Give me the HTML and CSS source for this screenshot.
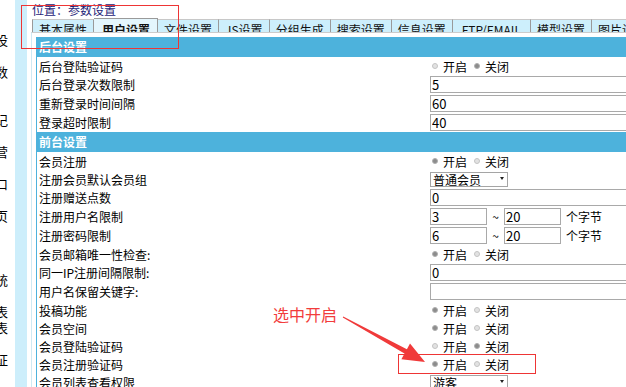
FILE: index.html
```html
<!DOCTYPE html>
<html lang="zh-CN">
<head>
    <meta charset="UTF-8">
    <title>参数设置</title>
    <link rel="stylesheet" href="styles.css">
</head>
<body>
    <div class="page">
        <div class="side-menu">
            <div>设</div><div></div><div>数</div><div></div><div></div><div>记</div><div></div>
            <div>营</div><div></div><div>口</div><div></div><div>页</div><div></div><div></div>
            <div></div><div>统</div><div></div><div>表</div><div>表</div><div></div><div>证</div>
        </div>
        <div class="side-bar"></div>
        <div class="main">
            <div class="crumb">位置：参数设置</div>
            <ul class="tabs">
                <li class="first">基本属性</li>
                <li class="on">用户设置</li>
                <li>文件设置</li>
                <li>JS设置</li>
                <li>分组生成</li>
                <li>搜索设置</li>
                <li>信息设置</li>
                <li class="wide">FTP/EMAIL</li>
                <li>模型设置</li>
                <li>图片设置</li>
            </ul>
            <div class="panel">
                <div class="cfg">
                    <div class="cfg-head">后台设置</div>
                    <div class="cfg-row">
                        <span class="cfg-label">后台登陆验证码</span>
                        <span class="cfg-value">
                            <input type="radio" name="adminpass"><label>开启</label>
                            <input type="radio" name="adminpass" class="second" checked><label>关闭</label>
                        </span>
                    </div>
                    <div class="cfg-row tall">
                        <span class="cfg-label">后台登录次数限制</span>
                        <span class="cfg-value"><input type="text" class="long" value="5"></span>
                    </div>
                    <div class="cfg-row tall">
                        <span class="cfg-label">重新登录时间间隔</span>
                        <span class="cfg-value"><input type="text" class="long" value="60"></span>
                    </div>
                    <div class="cfg-row tall">
                        <span class="cfg-label">登录超时限制</span>
                        <span class="cfg-value"><input type="text" class="long" value="40"></span>
                    </div>

                    <div class="cfg-head">前台设置</div>
                    <div class="cfg-row">
                        <span class="cfg-label">会员注册</span>
                        <span class="cfg-value">
                            <input type="radio" name="register" checked><label>开启</label>
                            <input type="radio" name="register" class="second"><label>关闭</label>
                        </span>
                    </div>
                    <div class="cfg-row">
                        <span class="cfg-label">注册会员默认会员组</span>
                        <span class="cfg-value">
                            <span class="pick"><select><option>普通会员</option><option>VIP会员</option></select></span>
                        </span>
                    </div>
                    <div class="cfg-row tall">
                        <span class="cfg-label">注册赠送点数</span>
                        <span class="cfg-value"><input type="text" class="long" value="0"></span>
                    </div>
                    <div class="cfg-row tall">
                        <span class="cfg-label">注册用户名限制</span>
                        <span class="cfg-value">
                            <input type="text" class="short" value="3"><span class="tilde">~</span><input type="text" class="short" value="20"><span class="unit">个字节</span>
                        </span>
                    </div>
                    <div class="cfg-row tall">
                        <span class="cfg-label">注册密码限制</span>
                        <span class="cfg-value">
                            <input type="text" class="short" value="6"><span class="tilde">~</span><input type="text" class="short" value="20"><span class="unit">个字节</span>
                        </span>
                    </div>
                    <div class="cfg-row">
                        <span class="cfg-label">会员邮箱唯一性检查:</span>
                        <span class="cfg-value">
                            <input type="radio" name="email" checked><label>开启</label>
                            <input type="radio" name="email" class="second"><label>关闭</label>
                        </span>
                    </div>
                    <div class="cfg-row tall">
                        <span class="cfg-label">同一IP注册间隔限制:</span>
                        <span class="cfg-value"><input type="text" class="long" value="0"></span>
                    </div>
                    <div class="cfg-row tall">
                        <span class="cfg-label">用户名保留关键字:</span>
                        <span class="cfg-value"><input type="text" class="long" value=""></span>
                    </div>
                    <div class="cfg-row">
                        <span class="cfg-label">投稿功能</span>
                        <span class="cfg-value">
                            <input type="radio" name="post" checked><label>开启</label>
                            <input type="radio" name="post" class="second"><label>关闭</label>
                        </span>
                    </div>
                    <div class="cfg-row">
                        <span class="cfg-label">会员空间</span>
                        <span class="cfg-value">
                            <input type="radio" name="space" checked><label>开启</label>
                            <input type="radio" name="space" class="second"><label>关闭</label>
                        </span>
                    </div>
                    <div class="cfg-row">
                        <span class="cfg-label">会员登陆验证码</span>
                        <span class="cfg-value">
                            <input type="radio" name="loginkey"><label>开启</label>
                            <input type="radio" name="loginkey" class="second" checked><label>关闭</label>
                        </span>
                    </div>
                    <div class="cfg-row">
                        <span class="cfg-label">会员注册验证码</span>
                        <span class="cfg-value">
                            <input type="radio" name="regkey" checked><label>开启</label>
                            <input type="radio" name="regkey" class="second"><label>关闭</label>
                        </span>
                    </div>
                    <div class="cfg-row">
                        <span class="cfg-label">会员列表查看权限</span>
                        <span class="cfg-value">
                            <span class="pick"><select><option>游客</option><option>会员</option></select></span>
                        </span>
                    </div>
                </div>
            </div>
        </div>
    </div>

    <!-- annotations drawn over the screenshot -->
    <div class="note">选中开启</div>
    <svg class="overlay" width="626" height="387" viewBox="0 0 626 387">
        <rect x="21.5" y="5.5" width="157" height="43" fill="none" stroke="#ee3535" stroke-width="1"/>
        <rect x="398.5" y="354.5" width="137" height="19" fill="none" stroke="#ee3535" stroke-width="1"/>
        <polygon points="343.2,316.6 406.9,349.2 410,343.5 425,362 401.4,359.3 404.5,353.6 342.8,317.4" fill="#f03a3a"/>
    </svg>
</body>
</html>
```

FILE: styles.css
```css
body {
    margin: 0;
    font-family: "Noto Sans CJK SC", "Noto Sans", sans-serif;
    font-size: 12px;
    color: #000;
    background: #fff;
    position: relative;
    overflow: hidden;
}
.page {
    display: flex;
    height: 387px;
    overflow: hidden;
}
.side-menu {
    width: 15px;
    flex: none;
    overflow: hidden;
    padding-top: 32px;
    font-size: 13px;
}
.side-menu div {
    height: 16px;
    line-height: 16px;
    white-space: nowrap;
    text-indent: -5px;
}
.side-bar {
    width: 12px;
    flex: none;
    background-color: #cdeefb;
}
.main {
    flex: 1;
    min-width: 0;
    overflow: hidden;
    padding-left: 4px;
}
.crumb {
    padding: 3px 0 1px 1px;
    line-height: 14px;
    color: #1e2478;
}
.tabs {
    display: flex;
    align-items: flex-start;
    height: 14px;
    overflow: hidden;
    margin: 0 0 0 1px;
    padding: 0;
    list-style: none;
    white-space: nowrap;
}
.tabs li {
    margin-top: 1px;
    height: 13px;
    padding: 0 6px;
    line-height: 19px;
    background-color: #cdeffc;
    border-top: 1px solid #c8c8c8;
    border-right: 1px solid #9a9a9a;
    color: #111;
}
.tabs li.first {
    border-left: 1px solid #9a9a9a;
}
.tabs li.on {
    margin-top: 0;
    height: 14px;
    padding: 0 7px 0 8px;
    line-height: 21px;
    font-weight: bold;
    background-color: #e4f6fd;
    border-top-color: #9a9a9a;
}
.tabs li.wide {
    padding: 0 9px;
}
.panel {
    border-top: 1px solid #cccccc;
    border-left: 1px solid #cfe9f4;
    padding: 4px 0 0 4px;
    height: 400px;
}
.cfg {
    width: 720px;
    border-left: 1px solid #4db2dc;
}
.cfg-head {
    height: 20px;
    line-height: 20px;
    padding-left: 2px;
    background-color: #4db2dc;
    color: #fff;
    font-weight: bold;
}
.cfg-row {
    display: flex;
    align-items: center;
    height: 18px;
}
.cfg-row.tall {
    height: 19px;
}
.cfg-label {
    flex: none;
    width: 393px;
    padding-left: 2px;
    box-sizing: border-box;
    white-space: nowrap;
}
.cfg-value {
    display: flex;
    align-items: center;
    white-space: nowrap;
}
input[type="radio"] {
    appearance: none;
    -webkit-appearance: none;
    width: 6px;
    height: 6px;
    margin: 0 5px 0 2px;
    border-radius: 50%;
    box-sizing: border-box;
    border: 1px solid #c4c4c4;
    background-color: #e2e2e2;
}
input[type="radio"]:checked {
    border-color: #b0b0b0;
    background-color: #8c8c8c;
}
input[type="radio"].second {
    margin-left: 7px;
}
input[type="text"] {
    height: 17px;
    box-sizing: border-box;
    margin: 0;
    padding: 0 1px;
    border: 1px solid #a9a9a9;
    font-family: "Noto Sans CJK SC", "Noto Sans", sans-serif;
    font-size: 13px;
    line-height: 15px;
    color: #000;
}
input.long {
    width: 300px;
}
input.short {
    width: 57px;
}
.tilde {
    width: 17px;
    text-align: center;
}
.unit {
    margin-left: 5px;
}
.pick {
    position: relative;
    display: inline-block;
}
.pick select {
    appearance: none;
    -webkit-appearance: none;
    width: 78px;
    height: 15px;
    margin: 0;
    padding: 0 0 0 2px;
    border: 1px solid #a5a5a5;
    border-radius: 0;
    background: #fff;
    font-family: "Noto Sans CJK SC", sans-serif;
    font-size: 12px;
    line-height: 13px;
    color: #000;
}
.pick::after {
    content: "";
    position: absolute;
    right: 4px;
    top: 6px;
    border-left: 2px solid transparent;
    border-right: 2px solid transparent;
    border-top: 3px solid #222;
}
.note {
    position: absolute;
    left: 273px;
    top: 304px;
    font-size: 16px;
    line-height: 20px;
    color: #f23c3c;
}
.overlay {
    position: absolute;
    left: 0;
    top: 0;
    pointer-events: none;
}
```
